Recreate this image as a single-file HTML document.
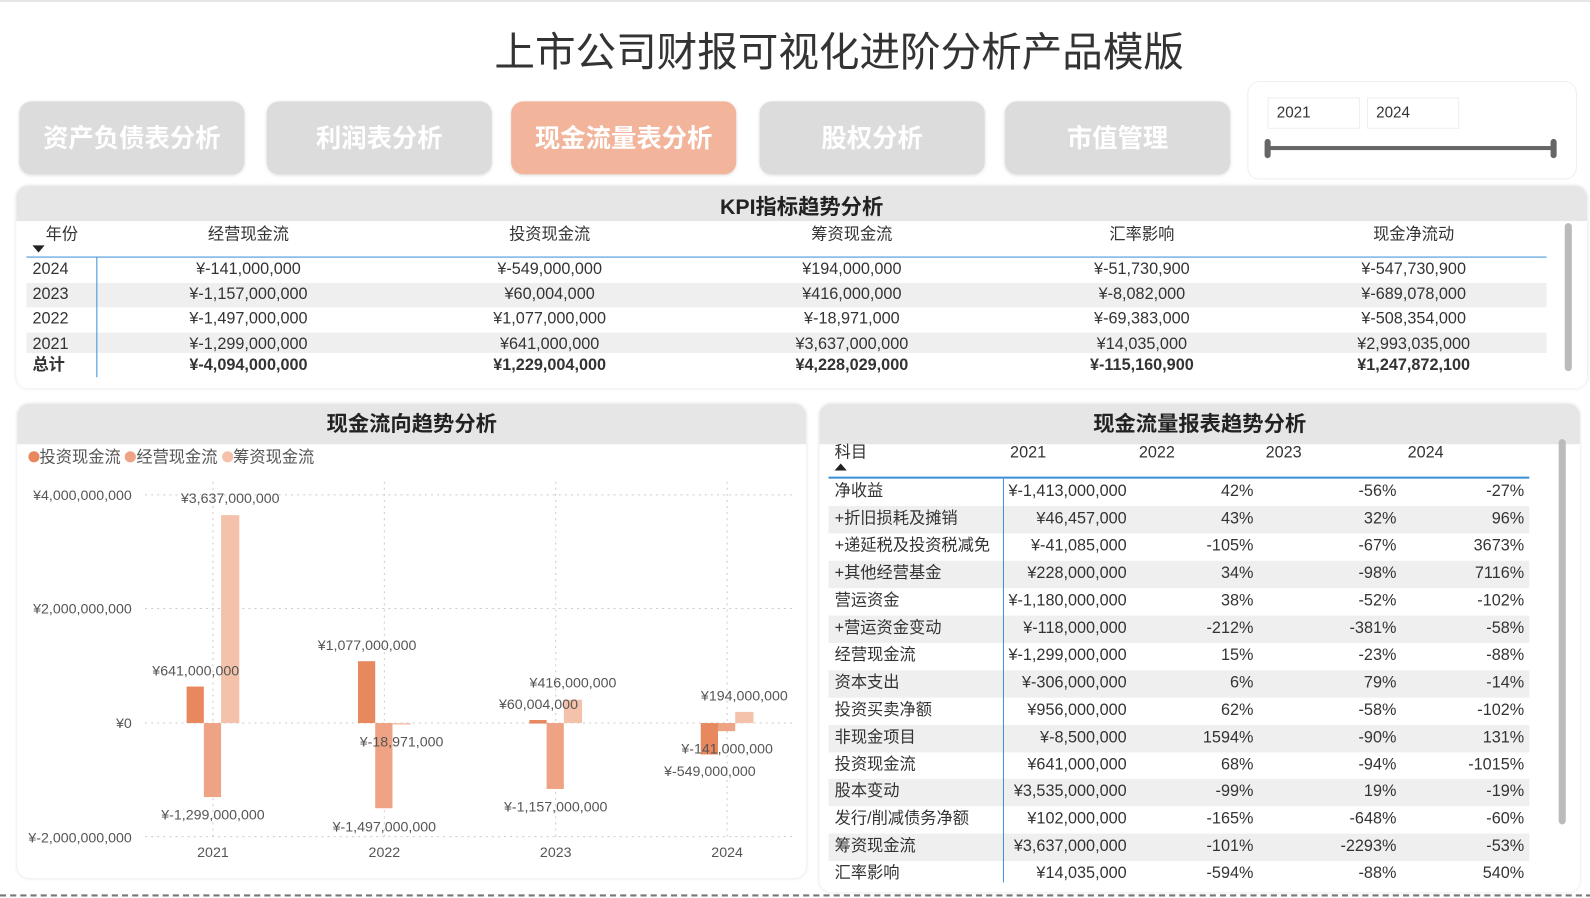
<!DOCTYPE html>
<html><head><meta charset="utf-8"><style>
*{box-sizing:border-box;margin:0;padding:0}
html,body{width:1590px;height:898px;overflow:hidden;background:#fff}
body{font-family:"Liberation Sans","Noto Sans CJK SC",sans-serif;color:#333;position:relative}
#w{position:absolute;left:0;top:0;width:1568px;height:886px;transform:scale(1.0141);transform-origin:0 0}
.a{position:absolute}
.title{left:0;width:1655px;top:25px;text-align:center;font-size:40px;color:#333;line-height:54px}
.tab{top:100px;height:72px;width:222px;border-radius:12px;background:#dcdcdc;color:#fff;font-weight:bold;font-size:25px;text-align:center;line-height:74px;box-shadow:0 1px 3px rgba(0,0,0,.12)}
.tab.on{background:#f2b59b}
.panel{background:#fff;border-radius:12px;box-shadow:0 0 3px rgba(0,0,0,.12);overflow:hidden}
.hd{position:absolute;left:0;right:0;top:0;background:#e6e6e6;font-weight:bold;font-size:21px;text-align:center;color:#222}
.t{position:absolute;font-size:16px;white-space:nowrap;color:#333;line-height:20px}
.c{transform:translateX(-50%)}
.r{transform:translateX(-100%)}
.row{position:absolute;background:#efefef}
.lbl{position:absolute;font-size:14px;color:#555;white-space:nowrap;line-height:16px}
</style></head><body><div id="w">
<div class="a" style="left:0;right:0;top:0;height:2px;background:#e6e6e6"></div>
<div class="a title">上市公司财报可视化进阶分析产品模版</div>
<div class="a tab" style="left:19px">资产负债表分析</div>
<div class="a tab" style="left:263px">利润表分析</div>
<div class="a tab on" style="left:504px">现金流量表分析</div>
<div class="a tab" style="left:749px">股权分析</div>
<div class="a tab" style="left:991px">市值管理</div>
<div class="a" style="left:1230px;top:80px;width:325px;height:97px;border:1px solid #eee;border-radius:12px"></div>
<div class="a" style="left:1250px;top:96px;width:91px;height:31px;border:1px solid #eee;font-size:15px;padding:6px 8px">2021</div>
<div class="a" style="left:1348px;top:96px;width:91px;height:31px;border:1px solid #eee;font-size:15px;padding:6px 8px">2024</div>
<div class="a" style="left:1250px;top:144px;width:283px;height:4px;background:#666"></div>
<div class="a" style="left:1247px;top:137px;width:6px;height:19px;border-radius:3px;background:#666"></div>
<div class="a" style="left:1529px;top:137px;width:6px;height:19px;border-radius:3px;background:#666"></div>

<div class="a panel" style="left:16px;top:183px;width:1549px;height:200px">
<div class="hd" style="height:35px;line-height:44px">KPI指标趋势分析</div>
</div>
<div class="a" style="left:1543px;top:220px;width:7px;height:146px;border-radius:4px;background:#bbb"></div>
<div class="t" style="left:45px;top:222px">年份</div>
<div class="a" style="left:32px;top:242px;width:0;height:0;border-left:6px solid transparent;border-right:6px solid transparent;border-top:7px solid #222"></div>
<div class="t c" style="left:245px;top:222px">经营现金流</div>
<div class="t c" style="left:542px;top:222px">投资现金流</div>
<div class="t c" style="left:840px;top:222px">筹资现金流</div>
<div class="t c" style="left:1126px;top:222px">汇率影响</div>
<div class="t c" style="left:1394px;top:222px">现金净流动</div>
<div class="row" style="left:26px;top:279px;width:1499px;height:24px"></div>
<div class="row" style="left:26px;top:328px;width:1499px;height:20px"></div>
<div class="a" style="left:26px;top:253px;width:1499px;height:1px;background:#3a8fd6"></div>
<div class="a" style="left:95px;top:254px;width:1px;height:118px;background:#3a8fd6"></div>
<div class="t" style="left:32px;top:256px">2024</div>
<div class="t" style="left:32px;top:281px">2023</div>
<div class="t" style="left:32px;top:305px">2022</div>
<div class="t" style="left:32px;top:330px">2021</div>
<div class="t" style="left:32px;top:351px;font-weight:bold">总计</div>
<div class="t c" style="left:245px;top:256px">¥-141,000,000</div>
<div class="t c" style="left:245px;top:281px">¥-1,157,000,000</div>
<div class="t c" style="left:245px;top:305px">¥-1,497,000,000</div>
<div class="t c" style="left:245px;top:330px">¥-1,299,000,000</div>
<div class="t c" style="left:245px;top:351px;font-weight:bold">¥-4,094,000,000</div>
<div class="t c" style="left:542px;top:256px">¥-549,000,000</div>
<div class="t c" style="left:542px;top:281px">¥60,004,000</div>
<div class="t c" style="left:542px;top:305px">¥1,077,000,000</div>
<div class="t c" style="left:542px;top:330px">¥641,000,000</div>
<div class="t c" style="left:542px;top:351px;font-weight:bold">¥1,229,004,000</div>
<div class="t c" style="left:840px;top:256px">¥194,000,000</div>
<div class="t c" style="left:840px;top:281px">¥416,000,000</div>
<div class="t c" style="left:840px;top:305px">¥-18,971,000</div>
<div class="t c" style="left:840px;top:330px">¥3,637,000,000</div>
<div class="t c" style="left:840px;top:351px;font-weight:bold">¥4,228,029,000</div>
<div class="t c" style="left:1126px;top:256px">¥-51,730,900</div>
<div class="t c" style="left:1126px;top:281px">¥-8,082,000</div>
<div class="t c" style="left:1126px;top:305px">¥-69,383,000</div>
<div class="t c" style="left:1126px;top:330px">¥14,035,000</div>
<div class="t c" style="left:1126px;top:351px;font-weight:bold">¥-115,160,900</div>
<div class="t c" style="left:1394px;top:256px">¥-547,730,900</div>
<div class="t c" style="left:1394px;top:281px">¥-689,078,000</div>
<div class="t c" style="left:1394px;top:305px">¥-508,354,000</div>
<div class="t c" style="left:1394px;top:330px">¥2,993,035,000</div>
<div class="t c" style="left:1394px;top:351px;font-weight:bold">¥1,247,872,100</div>

<div class="a panel" style="left:17px;top:398px;width:778px;height:468px">
<div class="hd" style="height:40px;line-height:42px">现金流向趋势分析</div>
</div>
<div class="a" style="left:28px;top:443px;font-size:16px;color:#555;white-space:nowrap;line-height:18px">
<span style="display:inline-block;width:11px;height:11px;border-radius:50%;background:#e8885e"></span>投资现金流
<span style="display:inline-block;width:11px;height:11px;border-radius:50%;background:#eea384"></span>经营现金流
<span style="display:inline-block;width:11px;height:11px;border-radius:50%;background:#f4c2aa"></span>筹资现金流</div>
<svg class="a" style="left:0;top:0" width="800" height="898">
<g stroke="#ccc" stroke-dasharray="2 4" stroke-width="1">
<line x1="143" y1="488" x2="782" y2="488"/><line x1="143" y1="600" x2="782" y2="600"/><line x1="143" y1="713" x2="782" y2="713"/><line x1="143" y1="825" x2="782" y2="825"/>
<line x1="210" y1="475" x2="210" y2="825"/><line x1="379" y1="475" x2="379" y2="825"/><line x1="548" y1="475" x2="548" y2="825"/><line x1="717" y1="475" x2="717" y2="825"/>
</g>
<g>
<rect x="184" y="677" width="17" height="36" fill="#e8885e"/><rect x="201" y="713" width="17" height="73" fill="#eea384"/><rect x="218" y="508" width="18" height="205" fill="#f4c2aa"/>
<rect x="353" y="652" width="17" height="61" fill="#e8885e"/><rect x="370" y="713" width="17" height="84" fill="#eea384"/><rect x="387" y="713" width="18" height="1.5" fill="#f4c2aa"/>
<rect x="522" y="710" width="17" height="3.5" fill="#e8885e"/><rect x="539" y="713" width="17" height="65" fill="#eea384"/><rect x="556" y="690" width="18" height="23" fill="#f4c2aa"/>
<rect x="691" y="713" width="17" height="31" fill="#e8885e"/><rect x="708" y="713" width="17" height="8" fill="#eea384"/><rect x="725" y="702" width="18" height="11" fill="#f4c2aa"/>
</g>
</svg>
<div class="lbl r" style="left:130px;top:480px">¥4,000,000,000</div>
<div class="lbl r" style="left:130px;top:592px">¥2,000,000,000</div>
<div class="lbl r" style="left:130px;top:705px">¥0</div>
<div class="lbl r" style="left:130px;top:818px">¥-2,000,000,000</div>
<div class="lbl c" style="left:210px;top:832px">2021</div>
<div class="lbl c" style="left:379px;top:832px">2022</div>
<div class="lbl c" style="left:548px;top:832px">2023</div>
<div class="lbl c" style="left:717px;top:832px">2024</div>
<div class="lbl c" style="left:227px;top:483px">¥3,637,000,000</div>
<div class="lbl c" style="left:193px;top:653px">¥641,000,000</div>
<div class="lbl c" style="left:210px;top:795px">¥-1,299,000,000</div>
<div class="lbl c" style="left:362px;top:628px">¥1,077,000,000</div>
<div class="lbl c" style="left:396px;top:723px">¥-18,971,000</div>
<div class="lbl c" style="left:379px;top:807px">¥-1,497,000,000</div>
<div class="lbl c" style="left:565px;top:665px">¥416,000,000</div>
<div class="lbl c" style="left:531px;top:686px">¥60,004,000</div>
<div class="lbl c" style="left:548px;top:787px">¥-1,157,000,000</div>
<div class="lbl c" style="left:734px;top:678px">¥194,000,000</div>
<div class="lbl c" style="left:717px;top:730px">¥-141,000,000</div>
<div class="lbl c" style="left:700px;top:752px">¥-549,000,000</div>

<div class="a panel" style="left:808px;top:398px;width:750px;height:482px">
<div class="hd" style="height:40px;line-height:42px">现金流量报表趋势分析</div>
</div>
<div class="a" style="left:1537px;top:433px;width:7px;height:380px;border-radius:4px;background:#bbb"></div>
<div class="t" style="left:823px;top:437px">科目</div>
<div class="a" style="left:823px;top:457px;width:0;height:0;border-left:6px solid transparent;border-right:6px solid transparent;border-bottom:7px solid #222"></div>
<div class="t" style="left:996px;top:437px">2021</div>
<div class="t" style="left:1123px;top:437px">2022</div>
<div class="t" style="left:1248px;top:437px">2023</div>
<div class="t" style="left:1388px;top:437px">2024</div>
<div id="rt"></div>
<div class="a" style="left:817px;top:470px;width:691px;height:2px;background:#3a8fd6"></div>
<div class="a" style="left:989px;top:472px;width:1px;height:398px;background:#3a8fd6"></div>
<div class="a" style="left:0;width:1600px;top:882px;height:0;border-top:2px dashed #777"></div>
</div>
<script>
var d=[["净收益","¥-1,413,000,000","42%","-56%","-27%"],["+折旧损耗及摊销","¥46,457,000","43%","32%","96%"],["+递延税及投资税减免","¥-41,085,000","-105%","-67%","3673%"],["+其他经营基金","¥228,000,000","34%","-98%","7116%"],["营运资金","¥-1,180,000,000","38%","-52%","-102%"],["+营运资金变动","¥-118,000,000","-212%","-381%","-58%"],["经营现金流","¥-1,299,000,000","15%","-23%","-88%"],["资本支出","¥-306,000,000","6%","79%","-14%"],["投资买卖净额","¥956,000,000","62%","-58%","-102%"],["非现金项目","¥-8,500,000","1594%","-90%","131%"],["投资现金流","¥641,000,000","68%","-94%","-1015%"],["股本变动","¥3,535,000,000","-99%","19%","-19%"],["发行/削减债务净额","¥102,000,000","-165%","-648%","-60%"],["筹资现金流","¥3,637,000,000","-101%","-2293%","-53%"],["汇率影响","¥14,035,000","-594%","-88%","540%"]];
var h="",x=[1111,1236,1377,1503];
for(var i=0;i<d.length;i++){var y=472+i*26.95;
if(i%2==1)h+='<div class="row" style="left:817px;top:'+y+'px;width:691px;height:27px"></div>';
h+='<div class="t" style="left:823px;top:'+(y+3)+'px">'+d[i][0]+'</div>';
for(var j=0;j<4;j++)h+='<div class="t r" style="left:'+x[j]+'px;top:'+(y+3)+'px">'+d[i][j+1]+'</div>';}
document.getElementById("rt").innerHTML=h;
</script>
</body></html>
